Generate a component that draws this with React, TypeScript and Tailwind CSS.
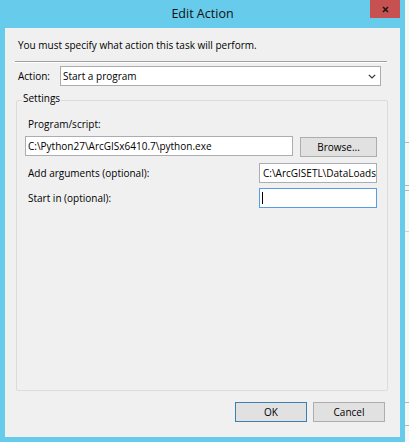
import React from "react";

const font = { fontFamily: '"Segoe UI", "Open Sans", "Noto Sans", sans-serif' };

function Btn({ children, def }: { children: React.ReactNode; def?: boolean }) {
  return (
    <div
      className={`flex h-[20px] w-[72px] items-center justify-center border bg-[#e1e1e1] text-[10px] leading-[14px] text-black ${
        def ? "border-[#3c7fb1]" : "border-[#adadad]"
      }`}
    >
      {children}
    </div>
  );
}

export default function App() {
  return (
    <div className="flex h-[442px] w-[409px] overflow-hidden" style={font}>
      {/* Dialog window */}
      <div className="flex h-[442px] w-[405px] flex-col bg-[#67cbeb]">
        {/* Title bar */}
        <div className="relative flex h-[28px] shrink-0 items-center justify-center">
          <span className="text-[12.5px] leading-[16px] text-[#111]">Edit Action</span>
          <div className="absolute right-[5px] top-0 flex h-[18px] w-[30px] items-center justify-center bg-[#c75050]">
            <svg width="7" height="7" viewBox="0 0 7 7">
              <path d="M1 1 L6 6 M6 1 L1 6" stroke="#1a1a1a" strokeWidth="1.6" />
            </svg>
          </div>
        </div>

        {/* Client area */}
        <div className="mx-[5px] flex h-[409px] flex-col bg-[#f0f0f0] text-[10px] leading-[14px] text-black">
          <div className="pl-[13px] pt-[10px]">You must specify what action this task will perform.</div>

          <div className="ml-[10px] mr-[13px] mt-[9px]">
            <div className="h-px bg-[#a0a0a0]" />
            <div className="h-px bg-white" />
          </div>

          {/* Action row */}
          <div className="mt-[3px] flex items-center pl-[13px]">
            <div className="w-[42px]">Action:</div>
            <div className="flex h-[20px] w-[321px] items-center justify-between border border-[#acacac] bg-white pl-[2px] pr-[4px]">
              <span>Start a program</span>
              <svg width="8" height="5" viewBox="0 0 8 5">
                <path d="M0.8 0.8 L4 4 L7.2 0.8" fill="none" stroke="#333" strokeWidth="1.2" />
              </svg>
            </div>
          </div>

          {/* Settings group */}
          <div className="relative ml-[11px] mt-[14px] flex h-[291px] w-[372px] flex-col rounded-[2px] border border-[#dcdcdc]">
            <div className="absolute left-[5px] top-[-10px] bg-[#f0f0f0] px-[1px]">Settings</div>

            <div className="pl-[11px] pt-[16px]">Program/script:</div>

            <div className="mt-[5px] flex items-start">
              <div className="ml-[8px] flex h-[20px] w-[268px] items-center overflow-hidden whitespace-nowrap border border-[#abadb3] bg-white pl-[2px]">
                C:\Python27\ArcGISx6410.7\python.exe
              </div>
              <div className="ml-[7px] mt-[1px] flex h-[20px] w-[77px] items-center justify-center border border-[#adadad] bg-[#e1e1e1]">
                Browse...
              </div>
            </div>

            <div className="mt-[6px] flex items-center justify-between pr-[10px]">
              <div className="pl-[11px]">Add arguments (optional):</div>
              <div className="flex h-[20px] w-[118px] items-center overflow-hidden whitespace-nowrap border border-[#abadb3] bg-white pl-[3px]">
                C:\ArcGISETL\DataLoads
              </div>
            </div>

            <div className="mt-[5px] flex items-center justify-between pr-[10px]">
              <div className="pl-[11px]">Start in (optional):</div>
              <div className="flex h-[20px] w-[118px] items-center border border-[#569de5] bg-white pl-[2px]">
                <div className="h-[12px] w-px bg-black" />
              </div>
            </div>
          </div>

          {/* Buttons */}
          <div className="mt-[11px] flex justify-end gap-[6px] pr-[15px]">
            <Btn def>OK</Btn>
            <Btn>Cancel</Btn>
          </div>
        </div>
      </div>

      {/* Background window sliver at the right */}
      <div className="flex h-[442px] w-[4px] flex-col bg-[#f7f7f7]">
        <div className="h-[142px]" />
        <div className="h-px bg-[#b5b5b5]" />
        <div className="h-[42px]" />
        <div className="h-px bg-[#b5b5b5]" />
        <div className="h-[4px]" />
        <div className="h-px bg-[#b5b5b5]" />
        <div className="h-[40px]" />
        <div className="h-px bg-[#d0d0d0]" />
        <div className="h-[170px]" />
        <div className="h-px bg-[#b5b5b5]" />
        <div className="h-[22px]" />
        <div className="h-px bg-[#b5b5b5]" />
      </div>
    </div>
  );
}
